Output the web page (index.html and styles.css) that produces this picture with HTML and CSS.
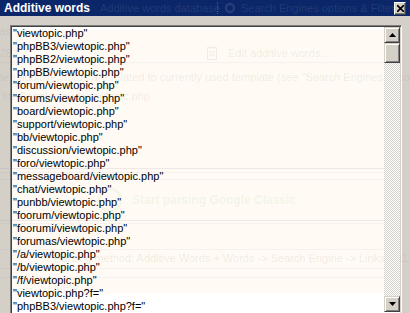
FILE: index.html
```html
<!DOCTYPE html>
<html lang="en">
<head>
  <meta charset="UTF-8" />
  <title>Additive words</title>
  <link rel="stylesheet" href="styles.css">
</head>
<body>
  <div class="window">
    <div class="titlebar">
      <span class="title">Additive words</span>
      <button class="close">
        <svg width="7" height="7" viewBox="0 0 7 7"><path d="M0 0L7 7M7 0L0 7" stroke="#000" stroke-width="1.6"/></svg>
      </button>
    </div>

    <div class="client">
      <div class="editor">
        <div class="lines">
          <div>"viewtopic.php"</div>
          <div>"phpBB3/viewtopic.php"</div>
          <div>"phpBB2/viewtopic.php"</div>
          <div>"phpBB/viewtopic.php"</div>
          <div>"forum/viewtopic.php"</div>
          <div>"forums/viewtopic.php"</div>
          <div>"board/viewtopic.php"</div>
          <div>"support/viewtopic.php"</div>
          <div>"bb/viewtopic.php"</div>
          <div>"discussion/viewtopic.php"</div>
          <div>"foro/viewtopic.php"</div>
          <div>"messageboard/viewtopic.php"</div>
          <div>"chat/viewtopic.php"</div>
          <div>"punbb/viewtopic.php"</div>
          <div>"foorum/viewtopic.php"</div>
          <div>"foorumi/viewtopic.php"</div>
          <div>"forumas/viewtopic.php"</div>
          <div>"/a/viewtopic.php"</div>
          <div>"/b/viewtopic.php"</div>
          <div>"/f/viewtopic.php"</div>
          <div>"viewtopic.php?f="</div>
          <div>"phpBB3/viewtopic.php?f="</div>
        </div>
        <div class="vscroll">
          <div class="sbtn">
            <svg width="7" height="4" viewBox="0 0 7 4"><path d="M3.5 0L7 4H0z" fill="#000"/></svg>
          </div>
          <div class="track">
            <div class="thumb"></div>
          </div>
          <div class="sbtn">
            <svg width="7" height="4" viewBox="0 0 7 4"><path d="M0 0H7L3.5 4z" fill="#000"/></svg>
          </div>
        </div>
      </div>
    </div>

    <!-- the window underneath, showing through -->
    <div class="ghost">
      <svg class="g-gear1" width="10" height="10" viewBox="0 0 10 10"><circle cx="5" cy="5" r="3.5" fill="none" stroke="#fff" stroke-width="2"/></svg>
      <span class="g-tab1">Additive words database</span>
      <span class="g-sep"></span>
      <svg class="g-gear2" width="12" height="12" viewBox="0 0 12 12"><circle cx="6" cy="6" r="4" fill="none" stroke="#fff" stroke-width="2.4"/></svg>
      <span class="g-tab2">Search Engines options &amp; Filter</span>

      <div class="g-cream"></div>
      <div class="g-line g-l1"></div>
      <div class="g-line g-l2 dark"></div>
      <div class="g-line g-l3"></div>
      <div class="g-line g-l4"></div>
      <div class="g-line g-l5 dark"></div>
      <div class="g-line g-l6"></div>
      <div class="g-line g-l7"></div>
      <div class="g-line g-l8"></div>
      <div class="g-line g-l9"></div>

      <span class="g-text g-as">as</span>
      <span class="g-text g-num">284</span>
      <svg class="g-note" width="12" height="14" viewBox="0 0 12 14"><rect x="0.5" y="1.5" width="9" height="12" fill="none" stroke="#777"/><path d="M3 0V3M6 0V3M2 6H8M2 9H8" stroke="#777"/></svg>
      <span class="g-text g-edit">Edit additive words...</span>
      <span class="g-text g-info">pen additive words are related to currently used template (see "Search Engines options &amp; Filter")</span>
      <span class="g-text g-inurl">for Google: inurl:viewtopic.php</span>
      <svg class="g-start-icon" width="26" height="26" viewBox="0 0 26 26"><circle cx="13" cy="13" r="11" fill="none" stroke="#6c6" stroke-width="3"/></svg>
      <span class="g-start">Start parsing Google Classic</span>
      <span class="g-text g-method">Parsing method: Additive Words + Words -&gt; Search Engine -&gt; LinksList1.txt</span>
      <span class="g-text g-query">Query</span>
    </div>
  </div>
</body>
</html>
```

FILE: styles.css
```css
html, body {
  margin: 0;
  padding: 0;
}
body {
  width: 410px;
  height: 313px;
  overflow: hidden;
  background: #d4d0c8;
  font-family: "Liberation Sans", Arial, sans-serif;
  font-size: 11px;
  color: #000;
}
.window {
  position: relative;
  height: 313px;
}
.titlebar {
  height: 16px;
  background: #0c2769;
  display: flex;
  align-items: center;
  justify-content: space-between;
  padding: 0 4px 0 4px;
}
.title {
  position: relative;
  z-index: 2;
  color: #fff;
  font-weight: bold;
  font-size: 12px;
  line-height: 16px;
}
.close {
  position: relative;
  z-index: 2;
  width: 12px;
  height: 13px;
  margin-top: 1px;
  padding: 0;
  display: flex;
  align-items: center;
  justify-content: center;
  background: #d4d0c8;
  border: 1px solid;
  border-color: #fff #404040 #404040 #fff;
  box-shadow: inset -1px -1px #808080;
}
.client {
  padding: 9px 8px 0 10px;
}
.editor {
  height: 300px;
  display: flex;
  background: #fff;
  border: 1px solid;
  border-color: #808080 #fff #fff #808080;
  box-shadow: inset 1px 1px #404040, inset -1px -1px #d4d0c8;
  padding: 1px;
}
.lines {
  position: relative;
  z-index: 2;
  flex: 1;
  line-height: 13px;
  padding: 0 0 0 1px;
  white-space: nowrap;
}
.vscroll {
  position: relative;
  z-index: 2;
  width: 16px;
  display: flex;
  flex-direction: column;
}
.sbtn {
  width: 14px;
  height: 14px;
  background: #d4d0c8;
  border: 1px solid;
  border-color: #d4d0c8 #404040 #404040 #d4d0c8;
  box-shadow: inset 1px 1px #fff, inset -1px -1px #808080;
  display: flex;
  align-items: center;
  justify-content: center;
}
.track {
  height: 253px;
  background-color: #fff;
  background-image: conic-gradient(#d4d0c8 25%, #fff 0 50%, #d4d0c8 0 75%, #fff 0);
  background-size: 2px 2px;
}
.thumb {
  height: 18px;
  background: #d4d0c8;
  border: 1px solid;
  border-color: #d4d0c8 #404040 #404040 #d4d0c8;
  box-shadow: inset 1px 1px #fff, inset -1px -1px #808080;
}

/* faint window behind the dialog */
.ghost {
  position: absolute;
  inset: 0;
  z-index: 1;
  pointer-events: none;
  overflow: hidden;
}
.ghost > * {
  position: absolute;
  white-space: nowrap;
}
.g-gear1 { left: 79px; top: 3px; opacity: 0.1; }
.g-gear2 { left: 224px; top: 2px; opacity: 0.1; }
.g-tab1, .g-tab2 {
  top: 1px;
  line-height: 14px;
  color: rgba(255, 255, 255, 0.1);
}
.g-tab1 { left: 100px; }
.g-tab2 { left: 241px; }
.g-sep {
  left: 217px;
  top: 2px;
  height: 12px;
  border-left: 1px dotted rgba(255, 255, 255, 0.2);
}
.g-cream {
  left: 12px;
  top: 30px;
  width: 372px;
  height: 263px;
  background: #fffaf3;
}
.g-line {
  left: 0;
  width: 400px;
  height: 1px;
  background: rgba(120, 110, 150, 0.06);
}
.g-line.dark { background: rgba(120, 110, 150, 0.12); }
.g-l1 { top: 62px; }
.g-l2 { top: 168px; }
.g-l3 { top: 172px; }
.g-l4 { top: 179px; }
.g-l5 { top: 220px; }
.g-l6 { top: 223px; }
.g-l7 { top: 249px; }
.g-l8 { top: 268px; }
.g-l9 { top: 277px; }
.g-text {
  color: rgba(90, 90, 100, 0.11);
  line-height: 14px;
}
.g-as { left: -1px; top: 24px; }
.g-num { left: 0; top: 46px; }
.g-note { left: 207px; top: 46px; opacity: 0.1; }
.g-edit { left: 228px; top: 46px; }
.g-info { left: -3px; top: 70px; }
.g-inurl { left: 2px; top: 89px; }
.g-start-icon { left: 97px; top: 187px; opacity: 0.07; }
.g-start {
  left: 132px;
  top: 192px;
  font-size: 12px;
  font-weight: bold;
  line-height: 16px;
  color: rgba(110, 190, 120, 0.1);
}
.g-method { left: 54px; top: 251px; }
.g-query { left: 48px; top: 280px; }
```
